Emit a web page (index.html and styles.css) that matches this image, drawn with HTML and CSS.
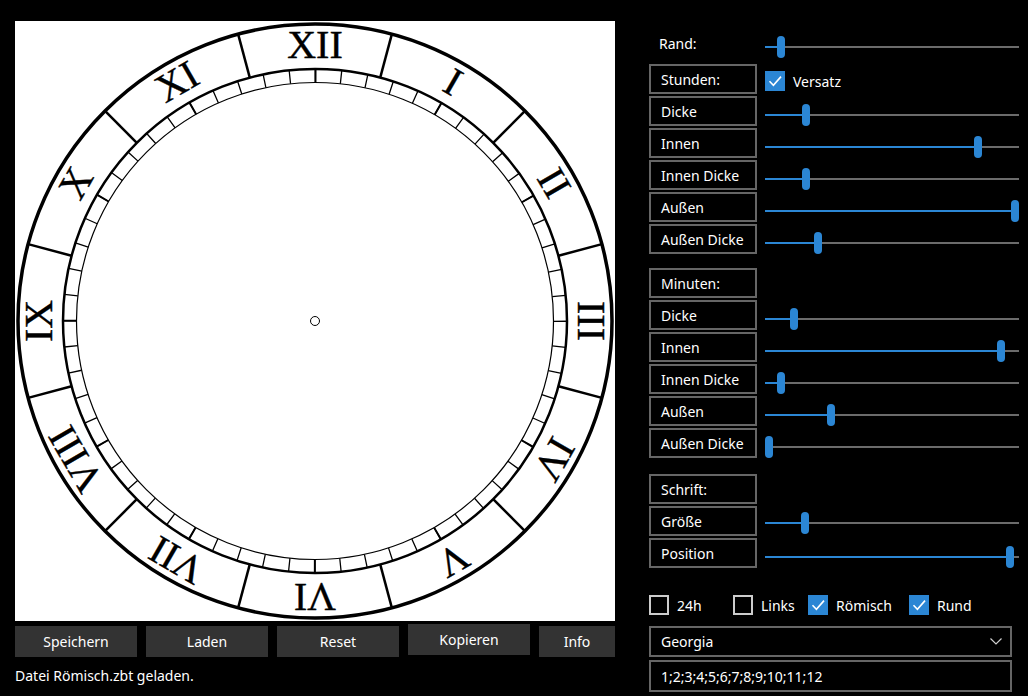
FILE: index.html
```html
<!DOCTYPE html>
<html lang="de">
<head>
<meta charset="utf-8">
<title>Zifferblatt</title>
<link rel="stylesheet" href="styles.css">
</head>
<body>
<div class="app">
  <div class="left">
    <div class="canvas">
      <svg class="clock" viewBox="0 0 600 600" width="600" height="600">
        <g fill="none" stroke="#000">
          <circle cx="300" cy="300" r="297" stroke-width="3.5"/>
          <circle cx="300" cy="300" r="252" stroke-width="2.5"/>
          <circle cx="300" cy="300" r="238.5" stroke-width="1.2"/>
          <circle cx="300" cy="300" r="245.25" stroke-width="13.5" stroke-dasharray="1.3 24.3825" stroke-dashoffset="0.65"/>
          <circle cx="300" cy="300" r="245.25" stroke-width="13.5" stroke-dasharray="2 126.4125" stroke-dashoffset="1"/>
          <circle cx="300" cy="300" r="4.5" stroke-width="1"/>
        </g>
        <g stroke="#000" stroke-width="2.5">
          <line x1="300" y1="3" x2="300" y2="48" transform="rotate(15 300 300)"/>
          <line x1="300" y1="3" x2="300" y2="48" transform="rotate(45 300 300)"/>
          <line x1="300" y1="3" x2="300" y2="48" transform="rotate(75 300 300)"/>
          <line x1="300" y1="3" x2="300" y2="48" transform="rotate(105 300 300)"/>
          <line x1="300" y1="3" x2="300" y2="48" transform="rotate(135 300 300)"/>
          <line x1="300" y1="3" x2="300" y2="48" transform="rotate(165 300 300)"/>
          <line x1="300" y1="3" x2="300" y2="48" transform="rotate(195 300 300)"/>
          <line x1="300" y1="3" x2="300" y2="48" transform="rotate(225 300 300)"/>
          <line x1="300" y1="3" x2="300" y2="48" transform="rotate(255 300 300)"/>
          <line x1="300" y1="3" x2="300" y2="48" transform="rotate(285 300 300)"/>
          <line x1="300" y1="3" x2="300" y2="48" transform="rotate(315 300 300)"/>
          <line x1="300" y1="3" x2="300" y2="48" transform="rotate(345 300 300)"/>
        </g>
        <g class="numerals" text-anchor="middle" fill="#000" stroke="#000" stroke-width="0.4">
          <text x="300" y="37">XII</text>
          <text x="300" y="37" transform="rotate(30 300 300)">I</text>
          <text x="300" y="37" transform="rotate(60 300 300)">II</text>
          <text x="300" y="37" transform="rotate(90 300 300)">III</text>
          <text x="300" y="37" transform="rotate(120 300 300)">IV</text>
          <text x="300" y="37" transform="rotate(150 300 300)">V</text>
          <text x="300" y="37" transform="rotate(180 300 300)">VI</text>
          <text x="300" y="37" transform="rotate(210 300 300)">VII</text>
          <text x="300" y="37" transform="rotate(240 300 300)">VIII</text>
          <text x="300" y="37" transform="rotate(270 300 300)">IX</text>
          <text x="300" y="37" transform="rotate(300 300 300)">X</text>
          <text x="300" y="37" transform="rotate(330 300 300)">XI</text>
        </g>
      </svg>
    </div>
    <div class="buttons">
      <div class="btn">Speichern</div>
      <div class="btn">Laden</div>
      <div class="btn">Reset</div>
      <div class="btn btn-active">Kopieren</div>
      <div class="btn btn-info">Info</div>
    </div>
    <div class="status">Datei Römisch.zbt geladen.</div>
  </div>

  <div class="right">
    <div class="row row-rand">
      <div class="label label-plain">Rand:</div>
      <div class="slider" style="--v:0.049"><div class="track"></div><div class="thumb"></div></div>
    </div>

    <div class="group">
      <div class="row">
        <div class="label">Stunden:</div>
        <div class="check check-versatz">
          <span class="box box-on"><svg viewBox="0 0 20 20" width="20" height="20"><path d="M4.5 10.2 L8.4 14.2 L16 5.6" fill="none" stroke="#fff" stroke-width="1.6"/></svg></span>
          <span>Versatz</span>
        </div>
      </div>
      <div class="row"><div class="label">Dicke</div><div class="slider" style="--v:0.149"><div class="track"></div><div class="thumb"></div></div></div>
      <div class="row"><div class="label">Innen</div><div class="slider" style="--v:0.848"><div class="track"></div><div class="thumb"></div></div></div>
      <div class="row"><div class="label">Innen Dicke</div><div class="slider" style="--v:0.149"><div class="track"></div><div class="thumb"></div></div></div>
      <div class="row"><div class="label">Außen</div><div class="slider" style="--v:1"><div class="track"></div><div class="thumb"></div></div></div>
      <div class="row"><div class="label">Außen Dicke</div><div class="slider" style="--v:0.199"><div class="track"></div><div class="thumb"></div></div></div>
    </div>

    <div class="group group-min">
      <div class="row"><div class="label">Minuten:</div></div>
      <div class="row"><div class="label">Dicke</div><div class="slider" style="--v:0.1"><div class="track"></div><div class="thumb"></div></div></div>
      <div class="row"><div class="label">Innen</div><div class="slider" style="--v:0.942"><div class="track"></div><div class="thumb"></div></div></div>
      <div class="row"><div class="label">Innen Dicke</div><div class="slider" style="--v:0.049"><div class="track"></div><div class="thumb"></div></div></div>
      <div class="row"><div class="label">Außen</div><div class="slider" style="--v:0.25"><div class="track"></div><div class="thumb"></div></div></div>
      <div class="row"><div class="label">Außen Dicke</div><div class="slider" style="--v:0"><div class="track"></div><div class="thumb"></div></div></div>
    </div>

    <div class="group group-font">
      <div class="row"><div class="label">Schrift:</div></div>
      <div class="row"><div class="label">Größe</div><div class="slider slider-up" style="--v:0.146"><div class="track"></div><div class="thumb"></div></div></div>
      <div class="row"><div class="label">Position</div><div class="slider" style="--v:0.98"><div class="track"></div><div class="thumb"></div></div></div>
    </div>

    <div class="checks">
      <div class="check cb-24h"><span class="box"></span><span>24h</span></div>
      <div class="check cb-links"><span class="box"></span><span>Links</span></div>
      <div class="check cb-roem"><span class="box box-on"><svg viewBox="0 0 20 20" width="20" height="20"><path d="M4.5 10.2 L8.4 14.2 L16 5.6" fill="none" stroke="#fff" stroke-width="1.6"/></svg></span><span>Römisch</span></div>
      <div class="check"><span class="box box-on"><svg viewBox="0 0 20 20" width="20" height="20"><path d="M4.5 10.2 L8.4 14.2 L16 5.6" fill="none" stroke="#fff" stroke-width="1.6"/></svg></span><span>Rund</span></div>
    </div>

    <div class="combo">
      <span>Georgia</span>
      <svg class="chevron" viewBox="0 0 12 7" width="12" height="7"><path d="M0.5 0.5 L6 6 L11.5 0.5" fill="none" stroke="#d0d0d0" stroke-width="1.2"/></svg>
    </div>
    <div class="textbox">1;2;3;4;5;6;7;8;9;10;11;12</div>
  </div>
</div>
</body>
</html>
```

FILE: styles.css
```css
html, body {
  margin: 0;
  padding: 0;
  background: #000;
}

body {
  font-family: "Noto Sans", "Open Sans", sans-serif;
  font-size: 14px;
  color: #fff;
}

.app {
  display: flex;
  width: 1028px;
  height: 696px;
  overflow: hidden;
}

/* left column */
.left {
  padding: 21px 0 0 15px;
  width: 600px;
  flex: none;
}

.canvas {
  width: 600px;
  height: 600px;
  background: #fff;
}

.clock {
  display: block;
}

.numerals {
  font-family: "Liberation Serif", "Times New Roman", serif;
  font-size: 40px;
}

.buttons {
  display: flex;
  align-items: flex-start;
  gap: 9px;
  margin-top: 5px;
  height: 31px;
}

.btn {
  width: 122px;
  height: 31px;
  background: #333;
  display: flex;
  align-items: center;
  justify-content: center;
  flex: none;
}

.btn-info {
  width: 76px;
}

.btn-active {
  margin-top: -2px;
}

.status {
  margin-top: 9px;
  line-height: 20px;
}

/* right column */
.right {
  margin-left: 34px;
  padding-top: 28px;
  width: 370px;
  flex: none;
  display: flex;
  flex-direction: column;
  align-items: flex-start;
}

.group {
  display: flex;
  flex-direction: column;
}

.row {
  display: flex;
  align-items: flex-start;
  margin-bottom: 2px;
}

.row-rand {
  margin-bottom: 6px;
}

.group-min {
  margin-top: 12px;
}

.group-font {
  margin-top: 14px;
}

.label {
  box-sizing: border-box;
  width: 108px;
  height: 30px;
  border: 2px solid #666;
  padding-left: 10px;
  display: flex;
  align-items: center;
  flex: none;
  white-space: nowrap;
}

.label-plain {
  border: 0;
}

.slider {
  position: relative;
  width: 254px;
  height: 30px;
  margin-left: 8px;
  flex: none;
}

.slider-up {
  top: -2px;
}

.track {
  position: absolute;
  left: 0;
  right: 0;
  top: 18px;
  height: 2px;
  background: linear-gradient(to right, #2b86d4 0 calc(var(--v) * 246px + 4px), #6b6b6b 0);
}

.thumb {
  position: absolute;
  top: 8px;
  left: calc(var(--v) * 246px);
  width: 8px;
  height: 22px;
  border-radius: 4px;
  background: #2b86d4;
}

.check {
  display: flex;
  align-items: center;
  gap: 8px;
  white-space: nowrap;
}

.check-versatz {
  margin-left: 8px;
  height: 30px;
  box-sizing: border-box;
  padding-top: 4px;
}

.box {
  box-sizing: border-box;
  width: 20px;
  height: 20px;
  border: 2px solid #ccc;
  flex: none;
  display: block;
}

.box svg {
  display: block;
}

.box-on {
  border: 0;
  background: #2b86d4;
}

.checks {
  display: flex;
  align-items: center;
  height: 20px;
  margin-top: 25px;
}

.cb-24h {
  width: 84px;
}

.cb-links {
  width: 75px;
}

.cb-roem {
  width: 101px;
}

.combo {
  box-sizing: border-box;
  width: 363px;
  height: 31px;
  margin-top: 11px;
  border: 2px solid #666;
  padding: 0 8px 0 10px;
  display: flex;
  align-items: center;
  justify-content: space-between;
}

.chevron {
  display: block;
}

.textbox {
  box-sizing: border-box;
  width: 363px;
  height: 32px;
  margin-top: 3px;
  border: 2px solid #666;
  padding-left: 10px;
  display: flex;
  align-items: center;
}
```
